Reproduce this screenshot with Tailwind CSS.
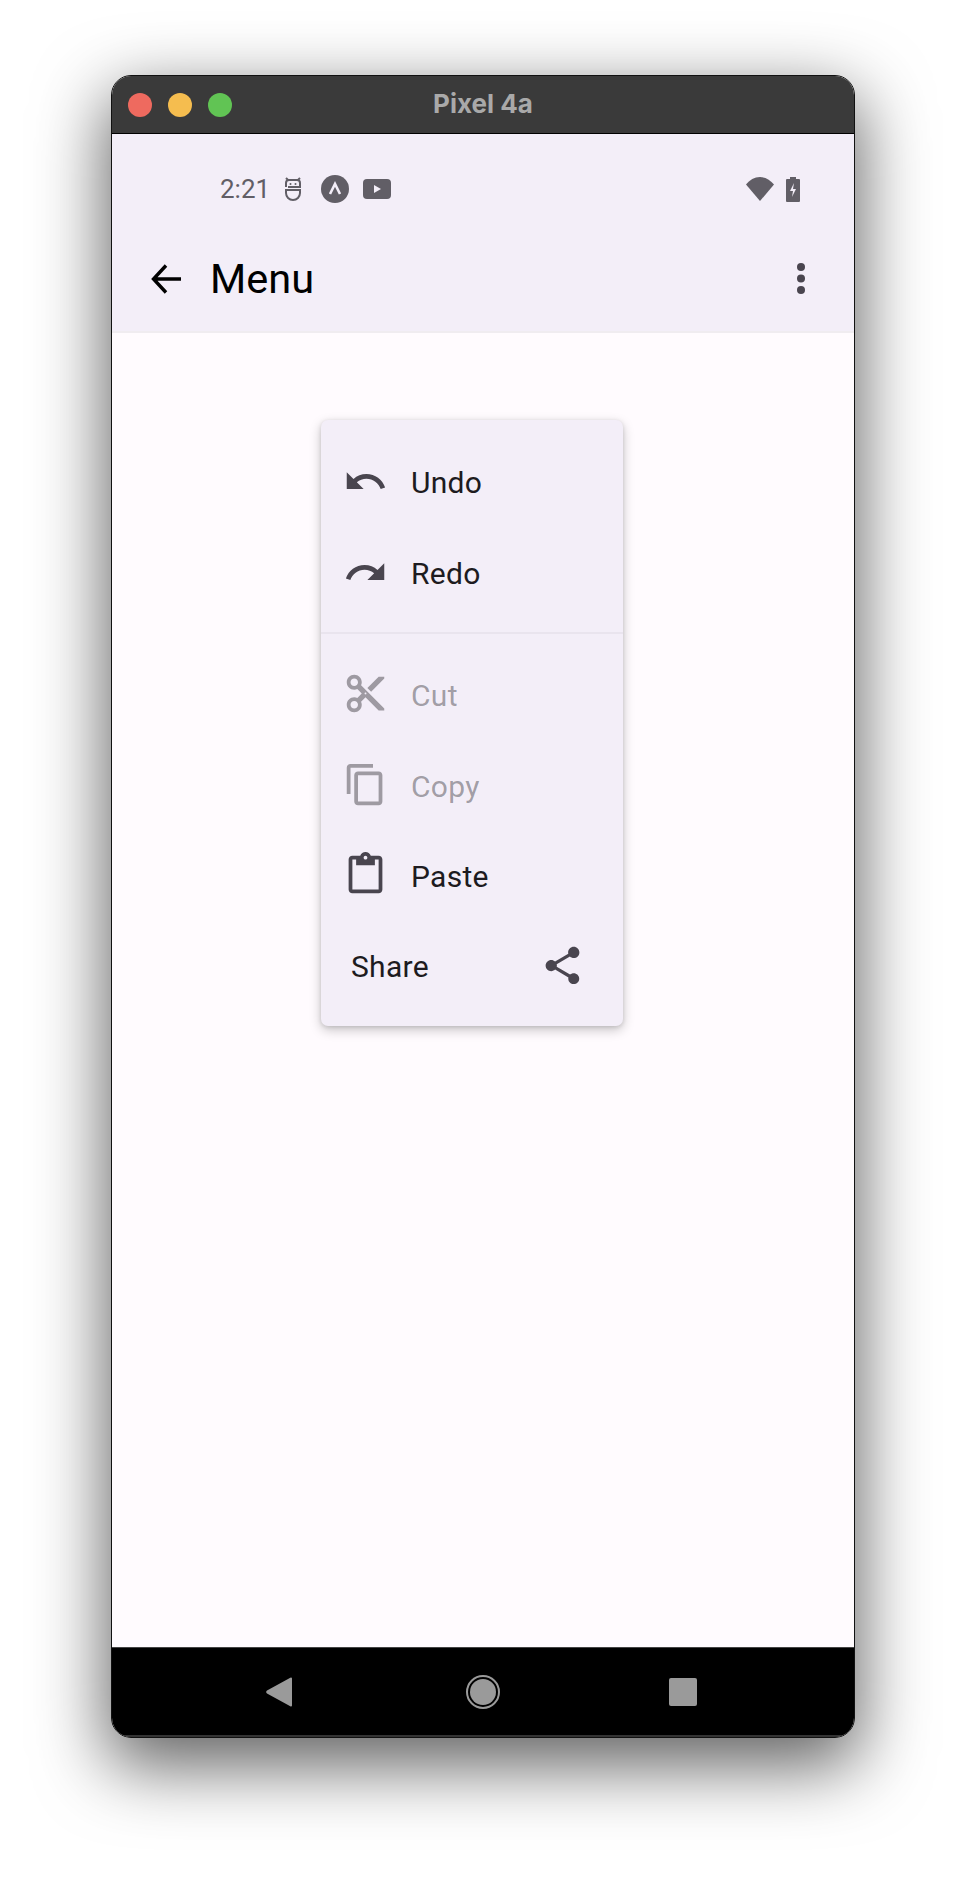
<!DOCTYPE html>
<html lang="en">
<head>
    <meta charset="UTF-8">
    <meta name="viewport" content="width=device-width, initial-scale=1.0">
    <title>Pixel 4a - Menu</title>
    <script src="https://cdn.jsdelivr.net/npm/@tailwindcss/browser@4"></script>
</head>
<body class="bg-white font-['Roboto',sans-serif]">
    <div class="w-[966px] h-[1886px] pt-[75px] pl-[111px] overflow-hidden">
        <div class="w-[744px] h-[1663px] flex flex-col rounded-[20px] overflow-hidden border border-[#111] shadow-[0_24px_70px_4px_rgba(0,0,0,0.62)]">

            <!-- Emulator title bar -->
            <div class="h-[58px] shrink-0 bg-[#3a3a3a] border-b border-black flex items-center relative">
                <div class="flex gap-[16px] pl-[16px]">
                    <div class="w-[24px] h-[24px] rounded-full bg-[#ee6a5f]"></div>
                    <div class="w-[24px] h-[24px] rounded-full bg-[#f5bd4f]"></div>
                    <div class="w-[24px] h-[24px] rounded-full bg-[#61c454]"></div>
                </div>
                <div class="absolute inset-0 pb-[2px] flex items-center justify-center text-[26px] font-bold text-[#a9a9a9] font-['Inter',sans-serif]">Pixel 4a</div>
            </div>

            <!-- App header -->
            <header class="shrink-0 bg-[#f3eef8] pt-[27px] pb-[4px] border-b-2 border-[#f0ecf0]">
                <div class="h-[56px] flex items-center pl-[108px] pr-[54px] text-[#615e66]">
                    <span class="text-[26px] w-[46px] leading-none whitespace-nowrap">2:21</span>
                    <svg class="ml-[18px] w-[18px] h-[24px]" viewBox="0 0 18 24" fill="none" stroke="currentColor" stroke-width="2">
                        <path d="M2 1l2 2h10l2-2M2 10V6a3 3 0 0 1 3-3h8a3 3 0 0 1 3 3v4H4M2 13h14v3a7 7 0 0 1-14 0z"/>
                        <circle cx="6.500" cy="7" r="1" fill="currentColor" stroke="none"/>
                        <circle cx="11.500" cy="7" r="1" fill="currentColor" stroke="none"/>
                    </svg>
                    <svg class="ml-[19px] w-[28px] h-[28px]" viewBox="0 0 28 28">
                        <circle cx="14" cy="14" r="14" fill="currentColor"/>
                        <path d="M9 19l5-10 5 10" fill="none" stroke="#f3eef8" stroke-width="2.600"/>
                    </svg>
                    <svg class="ml-[14px] w-[28px] h-[20px]" viewBox="0 0 28 20">
                        <rect width="28" height="20" rx="4" fill="currentColor"/>
                        <path d="M11 6l7 4-7 4z" fill="#f3eef8"/>
                    </svg>
                    <svg class="ml-auto w-[28px] h-[24px]" viewBox="0 0 28 24">
                        <path d="M0 7.500C3.500 3 8.500 0 14 0s10.500 3 14 7.500L14 24z" fill="currentColor"/>
                    </svg>
                    <svg class="ml-[12px] w-[14px] h-[25px]" viewBox="0 0 14 25">
                        <path d="M4 0h6v2h3a1 1 0 0 1 1 1v21a1 1 0 0 1-1 1H1a1 1 0 0 1-1-1V3a1 1 0 0 1 1-1h3z" fill="currentColor"/>
                        <path d="M8 6l-4 8h3l-1 6 4-8H7z" fill="#f3eef8"/>
                    </svg>
                </div>
                <div class="mt-[14px] h-[96px] flex items-center pl-[39px] pr-[49px]">
                    <svg class="w-[30px] h-[30px] text-black" viewBox="0 0 30 30" fill="none" stroke="currentColor" stroke-width="3.400">
                        <path d="M30 15H3M15 1.500L2.500 15 15 28.500"/>
                    </svg>
                    <h1 class="ml-[29px] text-[41.500px] text-black leading-none">Menu</h1>
                    <svg class="ml-auto mb-[2px] w-[8px] h-[31px] text-[#49454f]" viewBox="0 0 8 31" fill="currentColor">
                        <circle cx="4" cy="4" r="4"/><circle cx="4" cy="15.500" r="4"/><circle cx="4" cy="27" r="4"/>
                    </svg>
                </div>
            </header>

            <!-- Screen -->
            <main class="flex-1 bg-[#fffbfe] pt-[87px] pl-[209px]">
                <div class="w-[302px] h-[606px] bg-[#f3eef8] rounded-[7px] pt-[17px] shadow-[0_4px_12px_rgba(0,0,0,0.22),0_1px_4px_rgba(0,0,0,0.12)] text-[30px] text-[#1d1b20]">
                    <div class="h-[91px] flex items-center pl-[22px]">
                        <svg class="mb-[2px] w-[45px] h-[45px] text-[#49454f]" viewBox="0 0 24 24" fill="currentColor"><path d="M12.500 8c-2.650 0-5.050.99-6.900 2.600L2 7v9h9l-3.620-3.620c1.390-1.160 3.160-1.880 5.120-1.880 3.540 0 6.550 2.310 7.600 5.500l2.370-.78C21.080 11.030 17.150 8 12.500 8z"/></svg>
                        <span class="ml-[23px] tracking-[0.3px]">Undo</span>
                    </div>
                    <div class="h-[91px] flex items-center pl-[22px]">
                        <svg class="mb-[2px] w-[45px] h-[45px] text-[#49454f]" viewBox="0 0 24 24" fill="currentColor"><path d="M18.400 10.600C16.550 8.990 14.150 8 11.500 8c-4.650 0-8.580 3.030-9.960 7.220L3.900 16c1.050-3.190 4.050-5.500 7.600-5.500 1.950 0 3.730.72 5.120 1.880L13 16h9V7l-3.600 3.600z"/></svg>
                        <span class="ml-[23px] tracking-[0.3px]">Redo</span>
                    </div>
                    <div class="mt-[13px] mb-[16px] h-[2px] bg-[#e9e4ee]"></div>
                    <div class="h-[91px] flex items-center pl-[22px] text-[#1d1b20]/40">
                        <svg class="mb-[4px] w-[45px] h-[45px]" viewBox="0 0 24 24" fill="currentColor"><path d="M9.640 7.640c.23-.5.36-1.050.36-1.640 0-2.210-1.790-4-4-4S2 3.790 2 6s1.790 4 4 4c.59 0 1.140-.13 1.640-.36L10 12l-2.360 2.360C7.140 14.130 6.590 14 6 14c-2.210 0-4 1.790-4 4s1.790 4 4 4 4-1.790 4-4c0-.59-.13-1.140-.36-1.640L12 14l7 7h3v-1L9.640 7.640zM6 8c-1.100 0-2-.89-2-2s.9-2 2-2 2 .89 2 2-.9 2-2 2zm0 12c-1.100 0-2-.89-2-2s.9-2 2-2 2 .89 2 2-.9 2-2 2zm6-7.500c-.28 0-.5-.22-.5-.5s.22-.5.5-.5.5.22.5.5-.22.5-.5.5zM19 3l-6 6 2 2 7-7V3z"/></svg>
                        <span class="ml-[23px] tracking-[0.3px]">Cut</span>
                    </div>
                    <div class="h-[90px] flex items-center pl-[22px] text-[#1d1b20]/40">
                        <svg class="mb-[4px] w-[45px] h-[45px]" viewBox="0 0 24 24" fill="currentColor"><path d="M16 1H4c-1.100 0-2 .9-2 2v14h2V3h12V1zm3 4H8c-1.100 0-2 .9-2 2v14c0 1.100.9 2 2 2h11c1.100 0 2-.9 2-2V7c0-1.100-.9-2-2-2zm0 16H8V7h11v14z"/></svg>
                        <span class="ml-[23px] tracking-[0.3px]">Copy</span>
                    </div>
                    <div class="h-[91px] flex items-center pl-[22px]">
                        <svg class="mb-[4px] w-[45px] h-[45px] text-[#49454f]" viewBox="0 0 24 24" fill="currentColor"><path d="M19 2h-4.180C14.400.84 13.300 0 12 0c-1.300 0-2.400.84-2.820 2H5c-1.100 0-2 .9-2 2v16c0 1.100.9 2 2 2h14c1.100 0 2-.9 2-2V4c0-1.100-.9-2-2-2zm-7 0c.55 0 1 .45 1 1s-.45 1-1 1-1-.45-1-1 .45-1 1-1zm7 18H5V4h2v3h10V4h2v16z"/></svg>
                        <span class="ml-[23px] tracking-[0.3px]">Paste</span>
                    </div>
                    <div class="h-[89px] flex items-center pl-[30px] pr-[38px] justify-between">
                        <span class="tracking-[0.3px]">Share</span>
                        <svg class="mb-[2px] w-[45px] h-[45px] text-[#49454f]" viewBox="0 0 24 24" fill="currentColor"><path d="M18 16.080c-.76 0-1.440.3-1.960.77L8.910 12.700c.05-.23.09-.46.09-.7s-.04-.47-.09-.7l7.050-4.110c.54.5 1.250.81 2.040.81 1.660 0 3-1.340 3-3s-1.340-3-3-3-3 1.340-3 3c0 .24.04.47.09.7L8.040 9.810C7.500 9.310 6.790 9 6 9c-1.660 0-3 1.340-3 3s1.340 3 3 3c.79 0 1.500-.31 2.040-.81l7.120 4.160c-.05.21-.08.43-.08.65 0 1.610 1.310 2.920 2.920 2.920 1.610 0 2.920-1.310 2.920-2.920s-1.310-2.920-2.920-2.920z"/></svg>
                    </div>
                </div>
            </main>

            <!-- Android nav bar -->
            <nav class="h-[90px] shrink-0 bg-black flex items-center pl-[154px] border-t border-[#444] border-b-2 border-b-[#333]">
                <svg class="w-[26px] h-[30px]" viewBox="0 0 26 30"><path d="M25 0.500a1 1 0 0 1 1 1v27a1 1 0 0 1-1.700.7L1 16.500a2 2 0 0 1 0-3L24.300.8a1 1 0 0 1 .7-.3z" fill="#9a9a9a"/></svg>
                <div class="ml-[174px] w-[34px] h-[34px] rounded-full border-2 border-[#9a9a9a] p-[2px]">
                    <div class="w-full h-full rounded-full bg-[#9a9a9a]"></div>
                </div>
                <div class="ml-[169px] w-[28px] h-[28px] rounded-[2px] bg-[#9a9a9a]"></div>
            </nav>
        </div>
    </div>
</body>
</html>
